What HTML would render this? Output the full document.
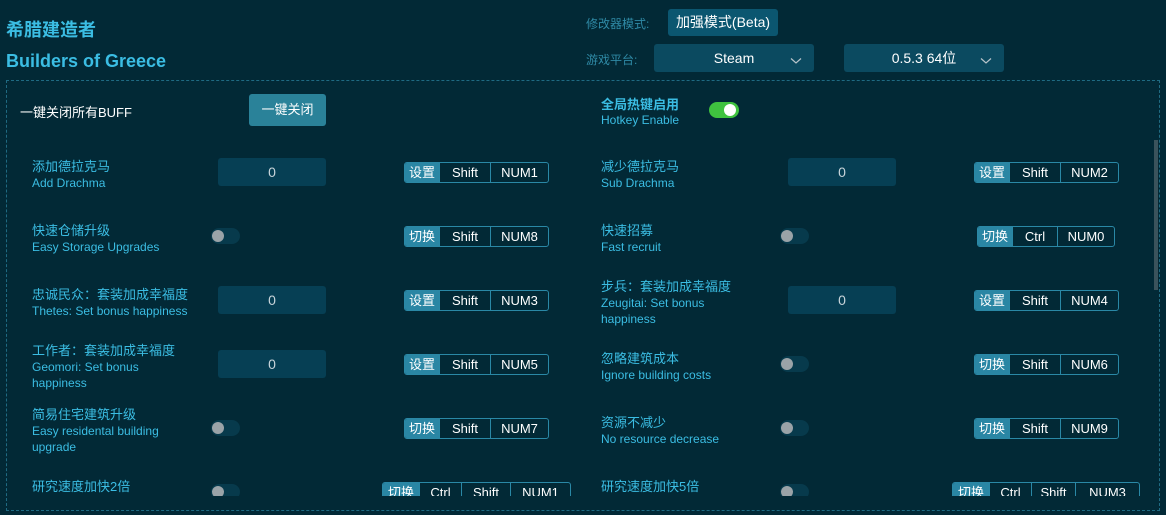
<!DOCTYPE html><html><head><meta charset="utf-8"><style>
*{margin:0;padding:0;box-sizing:border-box}
body{width:1166px;height:515px;background:#022936;font-family:"Liberation Sans","Noto Sans CJK SC",sans-serif;position:relative;overflow:hidden;color:#3bbde3}
.a{position:absolute;white-space:nowrap}
.t1{font-size:17px;font-weight:bold;color:#3bbde3}
.sm{font-size:12px;color:#2f8aa6}
.btn{background:#0b4a60;color:#fff;font-size:14px;text-align:center;border-radius:3px}
.box{position:absolute;left:6px;top:80px;width:1154px;height:431px;border:1px dashed #1f6a82}
.clip{position:absolute;left:0;top:90px;width:1166px;height:406px;overflow:hidden}
.zh{font-size:13px;color:#3bbde3}
.en{font-size:12px;color:#3bbde3;line-height:16px}
.inp{position:absolute;width:108px;height:28px;background:#063f54;border-radius:3px;color:#c8d4da;font-size:14px;text-align:center;line-height:28px}
.kg{position:absolute;height:21px;border:1px solid #2a88a6;border-radius:3px;display:flex;font-size:13px;color:#fff;overflow:hidden}
.kg span{display:block;text-align:center;line-height:19px;border-left:1px solid #2a88a6}
.kg span.tg{background:#2a86a4;border-left:none}
.tgl{position:absolute;width:29px;height:16px;border-radius:8px;background:#073a4c}
.tgl:after{content:"";position:absolute;left:1px;top:2px;width:12px;height:12px;border-radius:6px;background:#9aa3a8}
</style></head><body>
<div class="a t1" style="left:6px;top:16px;font-size:18px">希腊建造者</div>
<div class="a t1" style="left:6px;top:51px;font-size:18px">Builders of Greece</div>
<div class="a sm" style="left:586px;top:15px">修改器模式:</div>
<div class="a btn" style="left:668px;top:9px;width:110px;height:27px;line-height:27px;background:#0b5670">加强模式(Beta)</div>
<div class="a sm" style="left:586px;top:51px">游戏平台:</div>
<div class="a btn" style="left:654px;top:44px;width:160px;height:28px;line-height:28px">Steam</div>
<svg class="a" style="left:790px;top:57px" width="12" height="8"><path d="M1 1.5 L6 6 L11 1.5" fill="none" stroke="#b8c4ca" stroke-width="1.2"/></svg>
<div class="a btn" style="left:844px;top:44px;width:160px;height:28px;line-height:28px">0.5.3 64位</div>
<svg class="a" style="left:980px;top:57px" width="12" height="8"><path d="M1 1.5 L6 6 L11 1.5" fill="none" stroke="#b8c4ca" stroke-width="1.2"/></svg>
<div class="box"></div>
<div style="position:absolute;left:1154px;top:140px;width:4px;height:150px;background:#3a535c"></div>
<div class="clip">
<div class="a" style="left:20px;top:12px;font-size:13px;color:#fff">一键关闭所有BUFF</div>
<div class="a btn" style="left:249px;top:4px;width:77px;height:32px;line-height:32px;background:#2a8299;font-size:13px">一键关闭</div>
<div class="a" style="left:601px;top:4px;font-size:13px;font-weight:bold;color:#3bbde3">全局热键启用</div>
<div class="a en" style="left:601px;top:22px">Hotkey Enable</div>
<div class="a" style="left:709px;top:12px;width:30px;height:16px;border-radius:8px;background:#3fc23f"><div style="position:absolute;right:3px;top:2px;width:12px;height:12px;border-radius:6px;background:#fff"></div></div>

<div class="a zh" style="left:32px;top:66px">添加德拉克马</div><div class="a en" style="left:32px;top:85px">Add Drachma</div>
<div class="inp" style="left:218px;top:68px">0</div>
<div class="kg" style="left:404px;top:72px;width:145px"><span class="tg" style="width:34px">设置</span><span style="width:51px">Shift</span><span style="flex:1">NUM1</span></div>
<div class="a zh" style="left:601px;top:66px">减少德拉克马</div><div class="a en" style="left:601px;top:85px">Sub Drachma</div>
<div class="inp" style="left:788px;top:68px">0</div>
<div class="kg" style="left:974px;top:72px;width:145px"><span class="tg" style="width:34px">设置</span><span style="width:51px">Shift</span><span style="flex:1">NUM2</span></div>

<div class="a zh" style="left:32px;top:130px">快速仓储升级</div><div class="a en" style="left:32px;top:149px">Easy Storage Upgrades</div>
<div class="tgl" style="left:211px;top:138px"></div>
<div class="kg" style="left:404px;top:136px;width:145px"><span class="tg" style="width:34px">切换</span><span style="width:51px">Shift</span><span style="flex:1">NUM8</span></div>
<div class="a zh" style="left:601px;top:130px">快速招募</div><div class="a en" style="left:601px;top:149px">Fast recruit</div>
<div class="tgl" style="left:780px;top:138px"></div>
<div class="kg" style="left:977px;top:136px;width:138px"><span class="tg" style="width:34px">切换</span><span style="width:45px">Ctrl</span><span style="flex:1">NUM0</span></div>

<div class="a zh" style="left:32px;top:194px">忠诚民众：套装加成幸福度</div><div class="a en" style="left:32px;top:213px">Thetes: Set bonus happiness</div>
<div class="inp" style="left:218px;top:196px">0</div>
<div class="kg" style="left:404px;top:200px;width:145px"><span class="tg" style="width:34px">设置</span><span style="width:51px">Shift</span><span style="flex:1">NUM3</span></div>
<div class="a zh" style="left:601px;top:186px">步兵：套装加成幸福度</div><div class="a en" style="left:601px;top:205px;white-space:normal;width:140px">Zeugitai: Set bonus happiness</div>
<div class="inp" style="left:788px;top:196px">0</div>
<div class="kg" style="left:974px;top:200px;width:145px"><span class="tg" style="width:34px">设置</span><span style="width:51px">Shift</span><span style="flex:1">NUM4</span></div>

<div class="a zh" style="left:32px;top:250px">工作者：套装加成幸福度</div><div class="a en" style="left:32px;top:269px;white-space:normal;width:140px">Geomori: Set bonus happiness</div>
<div class="inp" style="left:218px;top:260px">0</div>
<div class="kg" style="left:404px;top:264px;width:145px"><span class="tg" style="width:34px">设置</span><span style="width:51px">Shift</span><span style="flex:1">NUM5</span></div>
<div class="a zh" style="left:601px;top:258px">忽略建筑成本</div><div class="a en" style="left:601px;top:277px">Ignore building costs</div>
<div class="tgl" style="left:780px;top:266px"></div>
<div class="kg" style="left:974px;top:264px;width:145px"><span class="tg" style="width:34px">切换</span><span style="width:51px">Shift</span><span style="flex:1">NUM6</span></div>

<div class="a zh" style="left:32px;top:314px">简易住宅建筑升级</div><div class="a en" style="left:32px;top:333px;white-space:normal;width:150px">Easy residental building upgrade</div>
<div class="tgl" style="left:211px;top:330px"></div>
<div class="kg" style="left:404px;top:328px;width:145px"><span class="tg" style="width:34px">切换</span><span style="width:51px">Shift</span><span style="flex:1">NUM7</span></div>
<div class="a zh" style="left:601px;top:322px">资源不减少</div><div class="a en" style="left:601px;top:341px">No resource decrease</div>
<div class="tgl" style="left:780px;top:330px"></div>
<div class="kg" style="left:974px;top:328px;width:145px"><span class="tg" style="width:34px">切换</span><span style="width:51px">Shift</span><span style="flex:1">NUM9</span></div>

<div class="a zh" style="left:32px;top:386px">研究速度加快2倍</div>
<div class="tgl" style="left:211px;top:394px"></div>
<div class="kg" style="left:382px;top:392px;width:189px"><span class="tg" style="width:36px">切换</span><span style="width:42px">Ctrl</span><span style="width:49px">Shift</span><span style="flex:1">NUM1</span></div>
<div class="a zh" style="left:601px;top:386px">研究速度加快5倍</div>
<div class="tgl" style="left:780px;top:394px"></div>
<div class="kg" style="left:952px;top:392px;width:188px"><span class="tg" style="width:36px">切换</span><span style="width:42px">Ctrl</span><span style="width:44px">Shift</span><span style="flex:1">NUM3</span></div>
</div>
</body></html>
